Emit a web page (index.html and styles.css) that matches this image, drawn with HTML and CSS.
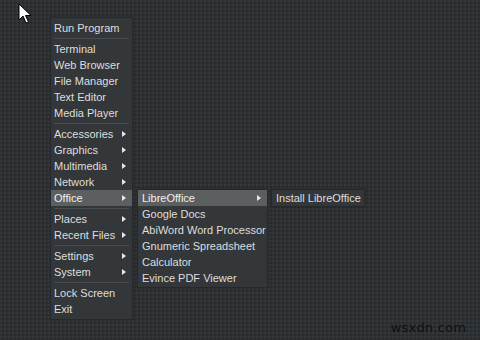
FILE: index.html
```html
<!DOCTYPE html>
<html>
<head>
<meta charset="utf-8">
<link rel="stylesheet" href="styles.css">
</head>
<body>
<div class="desktop">
  <svg class="cursor" width="14" height="22" viewBox="0 0 14 22">
    <path d="M1 1 L1 17 L5 13 L8 20 L10.5 19 L7.5 12.5 L13 12.5 Z" fill="#fff" stroke="#000" stroke-width="1" stroke-linejoin="round"/>
  </svg>

  <div class="menu menu-main">
    <div class="item">Run Program</div>
    <div class="sep"></div>
    <div class="item">Terminal</div>
    <div class="item">Web Browser</div>
    <div class="item">File Manager</div>
    <div class="item">Text Editor</div>
    <div class="item">Media Player</div>
    <div class="sep"></div>
    <div class="item sub">Accessories</div>
    <div class="item sub">Graphics</div>
    <div class="item sub">Multimedia</div>
    <div class="item sub">Network</div>
    <div class="item sub active">Office</div>
    <div class="sep"></div>
    <div class="item sub">Places</div>
    <div class="item sub">Recent Files</div>
    <div class="sep"></div>
    <div class="item sub">Settings</div>
    <div class="item sub">System</div>
    <div class="sep"></div>
    <div class="item">Lock Screen</div>
    <div class="item">Exit</div>
  </div>

  <div class="menu menu-office">
    <div class="item sub active">LibreOffice</div>
    <div class="item">Google Docs</div>
    <div class="item">AbiWord Word Processor</div>
    <div class="item">Gnumeric Spreadsheet</div>
    <div class="item">Calculator</div>
    <div class="item">Evince PDF Viewer</div>
  </div>

  <div class="menu menu-libre">
    <div class="item">Install LibreOffice</div>
  </div>

  <div class="watermark">wsxdn.com</div>
</div>
</body>
</html>
```
FILE: styles.css
```css
html, body {
  margin: 0;
  padding: 0;
}
body {
  width: 480px;
  height: 340px;
  overflow: hidden;
  font-family: "Liberation Sans", Arial, sans-serif;
}
.desktop {
  position: relative;
  width: 480px;
  height: 340px;
  background-color: #2d3133;
  background-image:
    radial-gradient(circle at 1px 1px, rgba(255,255,255,0.035) 0.8px, transparent 1px),
    radial-gradient(circle at 3px 3px, rgba(0,0,0,0.12) 0.8px, transparent 1px);
  background-size: 4px 4px, 4px 4px;
}
.cursor {
  position: absolute;
  left: 18px;
  top: 3px;
}
.menu {
  position: absolute;
  background: #343739;
  border: 1px solid #26292b;
  box-sizing: border-box;
  display: flex;
  flex-direction: column;
  color: #dedede;
  font-size: 11px;
  box-shadow: 0 0 2px rgba(0,0,0,0.25);
}
.menu-main {
  left: 50px;
  top: 17px;
  width: 83px;
  padding: 2px 0 2px;
}
.menu-office {
  left: 137px;
  top: 189px;
  width: 131px;
  padding: 0 0 1px;
}
.menu-libre {
  left: 271px;
  top: 189px;
  width: 94px;
  padding: 0;
}
.item {
  height: 16px;
  line-height: 17px;
  padding-left: 3px;
  white-space: nowrap;
  position: relative;
}
.menu-office .item,
.menu-libre .item {
  padding-left: 4px;
}
.item.active {
  background: #5c5f60;
  color: #f0f0f0;
}
.item.sub::after {
  content: "";
  position: absolute;
  right: 6px;
  top: 5px;
  border-left: 4px solid #e8e8e8;
  border-top: 3px solid transparent;
  border-bottom: 3px solid transparent;
}
.sep {
  height: 1px;
  margin: 2px 3px;
  background: #4a4d4f;
}
.watermark {
  position: absolute;
  right: 14px;
  bottom: 5px;
  color: #0e1012;
  font-family: "DejaVu Sans", sans-serif;
  font-size: 13px;
  letter-spacing: 0.2px;
}
```
